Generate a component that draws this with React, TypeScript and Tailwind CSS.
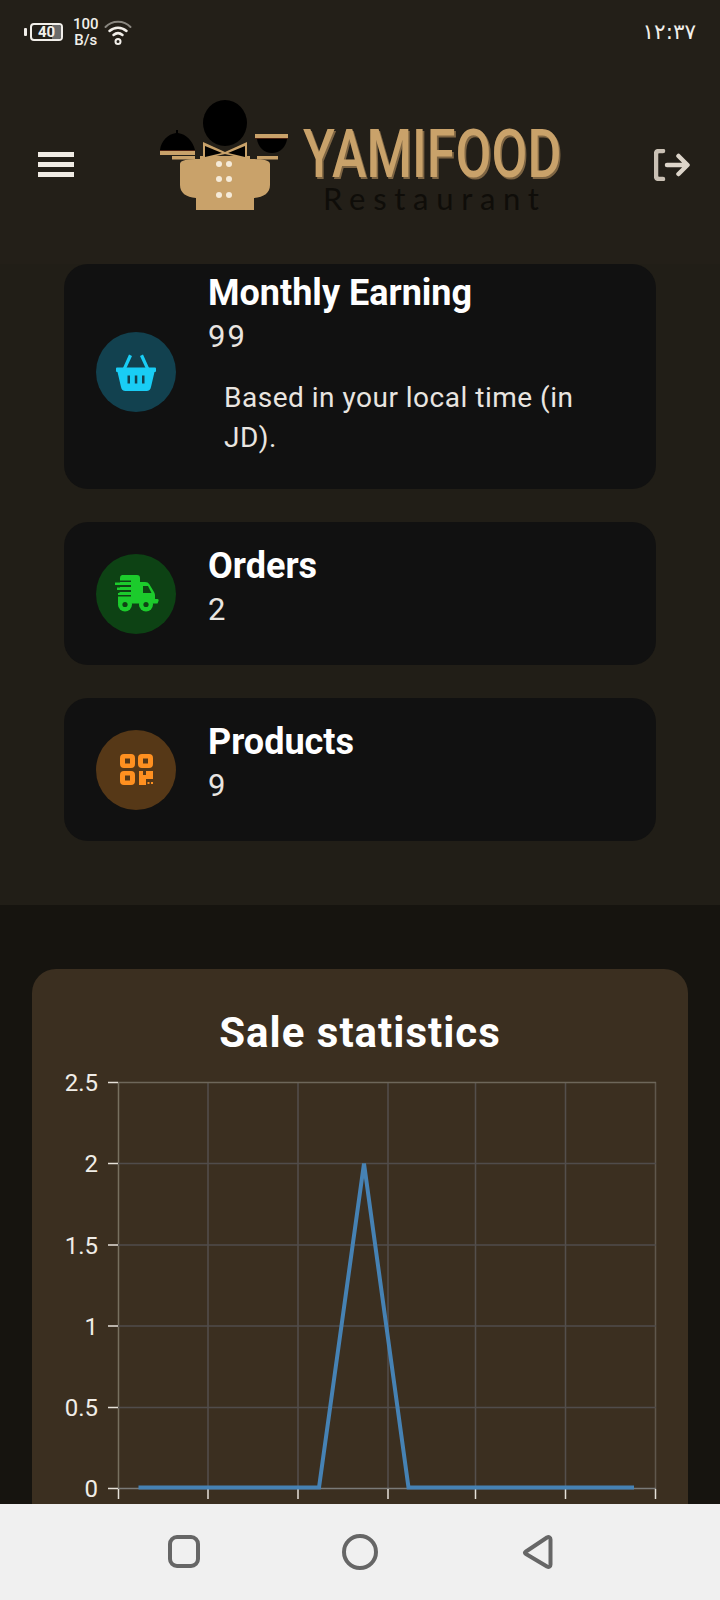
import type { ReactNode } from "react";

const BasketIcon = () => (
  <svg width="40" height="37" viewBox="0 0 40 37" fill="#19cdf5">
    <path d="M13 .5l3 1.500L10 15H6.500zM27 .5 24 2l6 13h3.500z" />
    <path d="M1 13.500h38a1 1 0 0 1 1 1V17a1 1 0 0 1-1 1h-.5L35 33c-.5 2.500-2 4-4.500 4h-21C7 37 5.500 35.500 5 33L1.500 18H1a1 1 0 0 1-1-1v-2.500a1 1 0 0 1 1-1z" />
    <path d="M11.500 21.500h2.500v8h-2.500zM18.800 21.500h2.500v8h-2.500zM26 21.500h2.500v8H26z" fill="#12414f" />
  </svg>
);

const TruckIcon = () => (
  <svg width="45" height="37" viewBox="0 0 45 37" fill="#1ccb2c">
    <path d="M8 0h15a3 3 0 0 1 3 3v4h5c2 0 3.500.8 4.500 2.500L40 17c.5 1 1 2 1 3v4h2.500c1 0 1.500 1 1 2l-1 2.500H4V18h2V3a3 3 0 0 1 2-3z" />
    <path d="M0 5.500h17v1.500H0zM0 10h17v2H0zM0 15h17v2H0zM0 20h17v1.500H0z" fill="#0f4214" />
    <path d="M1 7.500h16V10H1zM3 12.500h14V15H3zM5 17.500h12V20H5z" />
    <path d="M29 11h5l3.500 7H29z" fill="#0f4214" />
    <circle cx="11" cy="29.500" r="7" />
    <circle cx="11" cy="29.500" r="2.600" fill="#0f4214" />
    <circle cx="32" cy="29.500" r="7" />
    <circle cx="32" cy="29.500" r="2.600" fill="#0f4214" />
  </svg>
);

const QrIcon = () => (
  <svg width="33" height="32" viewBox="0 0 33 32" fill="#ff9020">
    <path fillRule="evenodd" d="M4 0h7a4 4 0 0 1 4 4v6a4 4 0 0 1-4 4H4a4 4 0 0 1-4-4V4a4 4 0 0 1 4-4zM5 4.500v5h5v-5z" />
    <path fillRule="evenodd" d="M22 0h7a4 4 0 0 1 4 4v6a4 4 0 0 1-4 4h-7a4 4 0 0 1-4-4V4a4 4 0 0 1 4-4zM23 4.500v5h5v-5z" />
    <path fillRule="evenodd" d="M4 17h7a4 4 0 0 1 4 4v6a4 4 0 0 1-4 4H4a4 4 0 0 1-4-4v-6a4 4 0 0 1 4-4zM5 21.500v5h5v-5z" />
    <path d="M19 17h4v4h3v-4h7v8h-7v6h-7zM27.500 28h2v2h-2zM31 28h2v2h-2z" />
  </svg>
);

const StatCard = ({
  icon,
  circle,
  title,
  value,
  note,
}: {
  icon: ReactNode;
  circle: string;
  title: string;
  value: string;
  note?: string;
}) => (
  <div
    className={`flex items-center gap-8 rounded-[24px] bg-[#111111] pl-8 ${
      note ? "h-[225px]" : "h-[143px]"
    }`}
  >
    <div
      className={`flex h-20 w-20 shrink-0 items-center justify-center rounded-full ${circle} ${
        note ? "mb-[9px]" : ""
      }`}
    >
      {icon}
    </div>
    <div className={`min-w-0 self-start ${note ? "mt-2" : "mt-[23px]"}`}>
      <div className="text-[36px] leading-[43px] font-bold text-white">{title}</div>
      <div className="text-[31px] leading-[43px] tracking-[2px] text-[#e9e5e0]">{value}</div>
      {note && (
        <p className="mt-5 ml-4 w-[370px] text-[28px] leading-[40px] tracking-[0.5px] text-[#e9e5e0]">
          {note}
        </p>
      )}
    </div>
  </div>
);

const ChefMark = () => (
  <svg width="140" height="130" viewBox="0 0 140 130" className="shrink-0">
    <ellipse cx="75" cy="33" rx="22" ry="23" fill="#000" />
    <path d="M10 60c1-9 8-16 16-17v-3h2v3c8 1 15 8 17 17z" fill="#000" />
    <rect x="10" y="60" width="35" height="1" fill="#4a1f10" />
    <rect x="10" y="61" width="35" height="4" fill="#c9a26a" />
    <rect x="22" y="66" width="23" height="3.500" fill="#c9a26a" />
    <rect x="105" y="44" width="33" height="4" fill="#c9a26a" />
    <rect x="105" y="48" width="33" height="1" fill="#4a1f10" />
    <path d="M107 49h30c-1 8-7 14-15 14s-14-6-15-14z" fill="#000" />
    <rect x="107" y="66" width="21" height="3.500" fill="#c9a26a" />
    <path
      d="M50 66h50v3c12 0 20 1 20 5v21c0 8-6 12-16 13v12H46v-12c-10-1-16-5-16-13V74c0-4 8-5 20-5z"
      fill="#c9a26a"
    />
    <path d="M53 52l22 10 22-10v17l-22-5-22 5z" fill="#c9a26a" />
    <path d="M55 56l17 7-17 4zM95 56l-17 7 17 4z" fill="#000" />
    {[74, 89, 105].map((y) => (
      <g key={y} fill="#f5ead8">
        <circle cx="69" cy={y} r="3" />
        <circle cx="79" cy={y} r="3" />
      </g>
    ))}
  </svg>
);

const Logo = () => (
  <div className="flex w-[410px] items-start font-['Roboto',sans-serif]">
    <ChefMark />
    <div className="ml-[13px] w-[257px] pt-[35px]">
      <div className="origin-left scale-x-[0.79] text-[66px] leading-[60px] font-medium whitespace-nowrap text-[#c9a26a] [text-shadow:2px_2px_0_#7e6543]">
        YAMIFOOD
      </div>
      <div className="mt-[-1px] ml-[20px] font-['Lato',sans-serif] text-[31px] leading-[28px] tracking-[7.700px] whitespace-nowrap text-[#0f0d09]">
        Restaurant
      </div>
    </div>
  </div>
);

const StatusBar = () => (
  <div className="flex h-[60px] items-start justify-between pr-6 pl-6 font-['Roboto',sans-serif] text-[#f2efea]">
    <div className="flex items-center pt-4">
      <div className="h-2 w-[2.500px] rounded-[1px] bg-[#f2efea]" />
      <div className="relative ml-[3.500px] flex h-[18px] w-[33px] items-center justify-center overflow-hidden rounded-[4px] border-2 border-[#f2efea]">
        <div className="absolute inset-y-0 right-0 w-[9px] bg-[#6b6b6b]" />
        <span className="relative text-[15px] leading-none font-bold">40</span>
      </div>
      <div className="ml-[10px] text-center text-[15px] leading-[16px] font-medium">
        100
        <br />
        B/s
      </div>
      <svg width="28" height="27" viewBox="0 0 28 27" className="ml-[5px]" fill="none" stroke="#f2efea" strokeLinecap="round">
        <path d="M1.500 8C8 1 20 1 26.500 8" strokeWidth="2" stroke="#8a8780" />
        <path d="M5.500 12c5-4.500 12-4.500 17 0" strokeWidth="2.500" />
        <path d="M9.500 16c3-2.500 6-2.500 9 0" strokeWidth="2.500" />
        <circle cx="14" cy="22.500" r="2.500" strokeWidth="2" />
      </svg>
    </div>
    <div className="pt-[19px] font-['DejaVu_Sans',sans-serif] text-[21.500px] leading-[26px]">۱۲:۳۷</div>
  </div>
);

const Header = () => (
  <header className="h-[264px] shrink-0 bg-[#231f18]">
    <StatusBar />
    <div className="flex items-start pt-[30px] pl-[38px]">
      <div className="mt-[62px] flex w-9 flex-col gap-[5px]">
        <span className="h-[5px] bg-[#f0ebe4]" />
        <span className="h-[5px] bg-[#f0ebe4]" />
        <span className="h-[5px] bg-[#f0ebe4]" />
      </div>
      <div className="ml-[76px]">
        <Logo />
      </div>
      <svg
        width="36"
        height="32"
        viewBox="0 0 36 32"
        className="mt-[59px] ml-[94px]"
        fill="none"
        stroke="#ddd5ca"
        strokeWidth="4.500"
        strokeLinecap="round"
        strokeLinejoin="round"
      >
        <path d="M9 2H5C3 2 2 3 2 5v22c0 2 1 3 3 3h4" stroke="#c9c0b4" />
        <path d="M13 16h20M24.500 7l9 9-9 9" />
      </svg>
    </div>
  </header>
);

const xGrid = [118.5, 208, 298, 388, 475.5, 565.5, 655.5];
const yTicks = [
  { label: "2.5", y: 1082.5 },
  { label: "2", y: 1163.5 },
  { label: "1.5", y: 1245 },
  { label: "1", y: 1326 },
  { label: "0.5", y: 1407.5 },
  { label: "0", y: 1488.5 },
];

// svg is placed with its top left at page (32, 1060), so everything shifts by that
const SaleChart = () => (
  <svg width="656" height="460" viewBox="32 1060 656 460" className="block">
    {xGrid.slice(1, -1).map((x) => (
      <line key={x} x1={x} x2={x} y1="1082" y2="1489" stroke="#544f4c" strokeWidth="1.500" />
    ))}
    <line x1="118.500" x2="118.500" y1="1082" y2="1489" stroke="#77705f" strokeWidth="1.500" />
    <line x1="655.500" x2="655.500" y1="1082" y2="1489" stroke="#5f574c" strokeWidth="1.500" />
    {yTicks.map((t, i) => (
      <g key={t.label}>
        <line
          x1="118"
          x2="656"
          y1={t.y}
          y2={t.y}
          stroke={i === 0 ? "#6e675a" : i === 5 ? "#7a7a78" : "#504c4b"}
          strokeWidth="1.500"
        />
        <line x1="108" x2="118" y1={t.y} y2={t.y} stroke="#e6e1d8" strokeWidth="1.500" />
        <text
          x="98"
          y={t.y + 8.500}
          textAnchor="end"
          fontFamily="Roboto, sans-serif"
          fontSize="24"
          fill="#f0ede7"
        >
          {t.label}
        </text>
      </g>
    ))}
    {xGrid.map((x) => (
      <line key={x} x1={x} x2={x} y1="1489" y2="1499" stroke="#e6e1d8" strokeWidth="1.500" />
    ))}
    <polyline
      points="138.500,1487.500 319,1487.500 364,1163.500 408.500,1487.500 634,1487.500"
      fill="none"
      stroke="#4682b4"
      strokeWidth="4"
    />
  </svg>
);

const NavBar = () => (
  <nav className="flex h-24 shrink-0 items-start bg-[#f0f0f0] pt-[30px] pl-[168px]">
    <svg width="33" height="34" viewBox="0 0 33 34" fill="none" stroke="#666666" strokeWidth="4">
      <rect x="2" y="3" width="28" height="29" rx="7" />
    </svg>
    <svg width="36" height="36" viewBox="0 0 36 36" className="ml-[141px]" fill="none" stroke="#666666" strokeWidth="4">
      <circle cx="18" cy="18" r="16" />
    </svg>
    <svg width="32" height="36" viewBox="0 0 32 36" className="ml-[144px]" fill="none" stroke="#666666" strokeWidth="4" strokeLinejoin="round">
      <path d="M4 17.500 25 3.500c2-1 3.500 0 3.500 2v25c0 2-1.500 3-3.500 2L4 20c-1.500-1-1.500-1.500 0-2.500z" />
    </svg>
  </nav>
);

const App = () => (
  <div className="flex h-[1600px] w-[720px] flex-col overflow-hidden font-['Roboto',sans-serif]">
    <Header />
    <main className="min-h-0 flex-1 overflow-hidden bg-[#16140f]">
      <section className="flex h-[641px] flex-col gap-[33px] bg-[#211e17] px-16">
        <StatCard
          icon={<BasketIcon />}
          circle="bg-[#12414f]"
          title="Monthly Earning"
          value="99"
          note="Based in your local time (in JD)."
        />
        <StatCard icon={<TruckIcon />} circle="bg-[#0d4214]" title="Orders" value="2" />
        <StatCard icon={<QrIcon />} circle="bg-[#563817]" title="Products" value="9" />
      </section>
      <section className="px-8 pt-16">
        <div className="rounded-t-[24px] bg-[#3b2f20]">
          <h2 className="pt-9 text-center text-[42px] leading-[55px] font-bold tracking-[1px] text-white">
            Sale statistics
          </h2>
          <SaleChart />
        </div>
      </section>
    </main>
    <NavBar />
  </div>
);

export default App;
